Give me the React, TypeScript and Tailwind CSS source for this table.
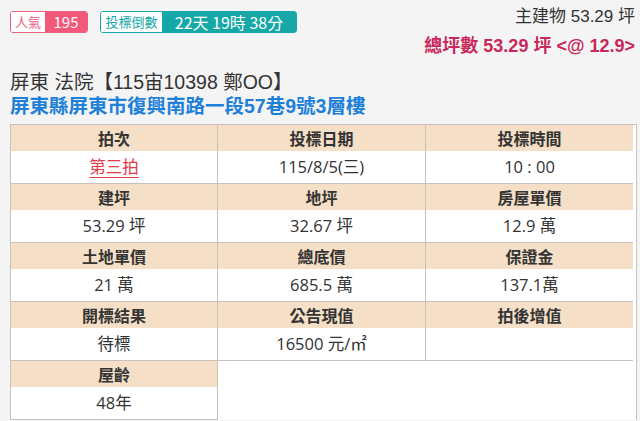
import React from 'react';

interface Cell {
  label: string;
  value: string;
  link?: boolean;
}

const cells: Cell[] = [
  { label: '拍次', value: '第三拍', link: true },
  { label: '投標日期', value: '115/8/5(三)' },
  { label: '投標時間', value: '10 : 00' },
  { label: '建坪', value: '53.29 坪' },
  { label: '地坪', value: '32.67 坪' },
  { label: '房屋單價', value: '12.9 萬' },
  { label: '土地單價', value: '21 萬' },
  { label: '總底價', value: '685.5 萬' },
  { label: '保證金', value: '137.1萬' },
  { label: '開標結果', value: '待標' },
  { label: '公告現值', value: '16500 元/㎡' },
  { label: '拍後增值', value: '' },
  { label: '屋齡', value: '48年' },
];

const App = () => {
  return (
    <div className="w-[640px] h-[421px] overflow-hidden bg-[#f4f4f4] text-[#333] font-['Liberation_Sans','Noto_Sans_CJK_TC',sans-serif]">
      <div className="flex justify-between pl-[10px] pr-[5px] pt-[4px]">
        <div className="flex items-start gap-3 mt-[7px]">
          <div className="flex h-[22px] rounded-[3px] border border-[#e8617f] overflow-hidden font-['Noto_Sans_CJK_TC',sans-serif]">
            <span className="w-[34px] bg-white text-[#e8617f] text-[13px] leading-[20px] text-center">人氣</span>
            <span className="w-[42px] bg-[#f2587a] text-white text-[15px] leading-[20px] text-center">195</span>
          </div>
          <div className="flex h-[22px] rounded-[3px] border border-[#16a8a7] font-['Noto_Sans_CJK_TC',sans-serif]">
            <span className="w-[61px] bg-white text-[#16a8a7] text-[13px] leading-[20px] text-center rounded-l-[2px]">投標倒數</span>
            <span className="w-[134px] bg-[#16a8a7] text-white text-[16px] leading-[20px] text-center whitespace-nowrap">22天 19時 38分</span>
          </div>
        </div>
        <div className="text-right">
          <div className="text-[17px] leading-[26px]">主建物 53.29 坪</div>
          <div className="text-[18px] leading-[32px] font-bold text-[#c8285a]">總坪數 53.29 坪 &lt;@ 12.9&gt;</div>
        </div>
      </div>

      <div className="pl-[10px] mt-[8px] text-[19.5px] leading-[24px]">屏東 法院【115宙10398 鄭OO】</div>
      <div className="pl-[10px] text-[19.5px] leading-[25px] font-semibold text-[#1f80d9]">屏東縣屏東市復興南路一段57巷9號3層樓</div>

      <div className="mt-[5px] ml-[10px] w-[627px] bg-white border-l border-r border-t border-[#c9c2bb] pr-[3px] font-['Open_Sans','Noto_Sans_CJK_TC',sans-serif]">
        <div className="grid grid-cols-[207px_208px_207px]">
          {cells.map((c, i) => (
            <div key={c.label} className={`border-b border-[#c9c2bb] ${i % 3 !== 2 ? 'border-r' : ''}`}>
              <div className="h-[26px] bg-[#f5dfc7] text-center text-[16px] leading-[26px] font-bold font-['Noto_Sans_CJK_TC',sans-serif]">
                {c.label}
              </div>
              <div className="h-[32px] text-center text-[16.5px] leading-[32px]">
                {c.link ? <span className="text-[#e03a45] underline underline-offset-4">{c.value}</span> : c.value}
              </div>
            </div>
          ))}
        </div>
      </div>
    </div>
  );
};

export default App;
